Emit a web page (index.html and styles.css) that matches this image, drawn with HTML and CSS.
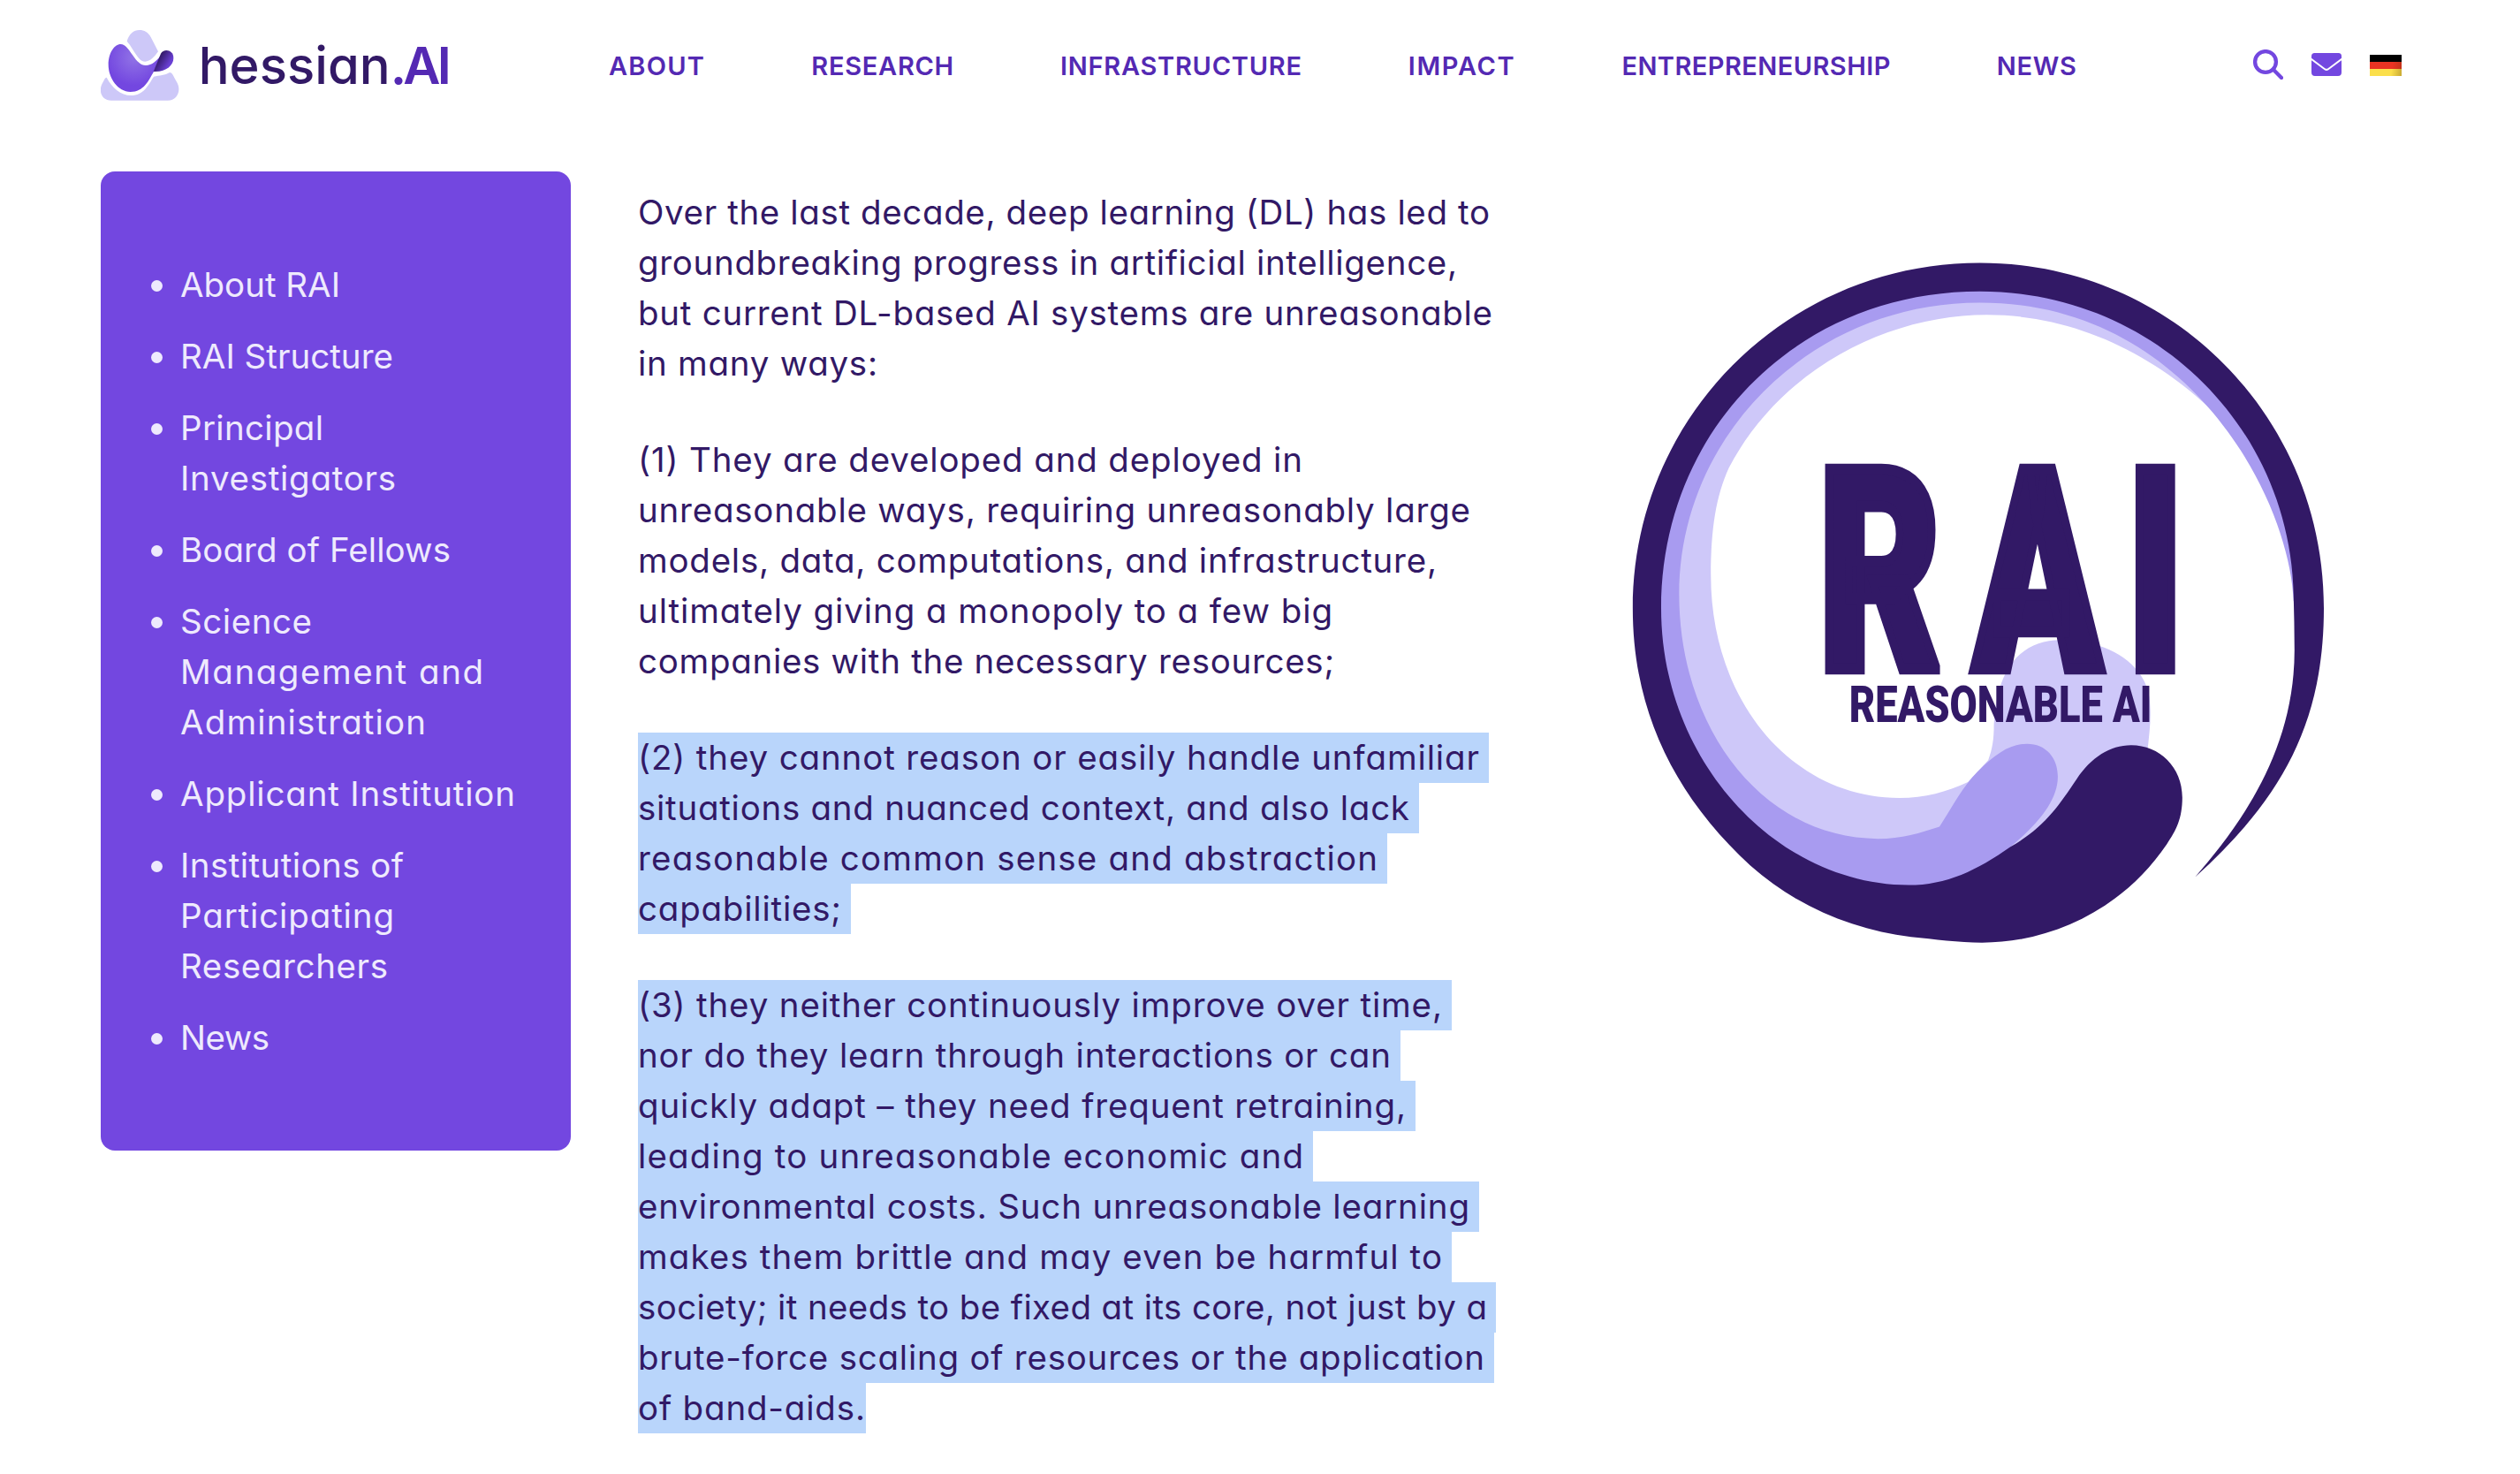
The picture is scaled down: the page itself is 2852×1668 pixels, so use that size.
FILE: index.html
```html
<!DOCTYPE html>
<html lang="en">
<head>
<meta charset="utf-8">
<title>hessian.AI – Reasonable AI</title>
<link rel="stylesheet" href="styles.css">
</head>
<body>
<header class="header">
  <a class="brand">
    <svg class="brand-mark" viewBox="42 42 266 240">
      <defs>
        <radialGradient id="body" gradientUnits="userSpaceOnUse" cx="155" cy="135" r="95">
          <stop offset="0" stop-color="#9173e6"/><stop offset="1" stop-color="#7347e0"/>
        </radialGradient>
        <linearGradient id="leaf" gradientUnits="userSpaceOnUse" x1="236" y1="140" x2="272" y2="162">
          <stop offset="0" stop-color="#321966"/><stop offset="1" stop-color="#6a40d4"/>
        </linearGradient>
      </defs>
      <path fill="#cdc8f8" d="M131 80C138 55 154 42 173 42C190 42 203 50 212 66L237 115C225 132 210 149 193 149C176 149 165 130 152 110Q142 92 131 80Z"/>
      <path fill="#cdc8f8" d="M62 203C80 237 110 264 145 264C188 264 204 228 222 200C242 196 260 196 276 186C284 186 288 196 292 204L302 222C316 250 300 281 270 281L78 281C46 281 34 250 46 226L56 207Q59 203 62 203Z"/>
      <path fill="url(#body)" d="M110 90C125 90 135 105 150 127C165 149 178 162 195 162C215 162 235 145 250 122L222 183C205 213 188 252 143 252C100 252 68 205 68 160C68 120 88 90 110 90Z"/>
      <path fill="url(#leaf)" d="M246 122C256 104 289 108 289 137C289 162 262 186 221 183Z"/>
    </svg>
    <span class="brand-name"><span data-fit="217">hessian</span><b data-fit="69">.AI</b></span>
  </a>
  <nav class="nav">
    <a data-fit="108">ABOUT</a>
    <a data-fit="161">RESEARCH</a>
    <a data-fit="273">INFRASTRUCTURE</a>
    <a data-fit="120">IMPACT</a>
    <a data-fit="304">ENTREPRENEURSHIP</a>
    <a data-fit="90">NEWS</a>
  </nav>
  <div class="tools">
    <svg class="tool-search" viewBox="0 0 34 34"><circle cx="14" cy="14" r="11.9"/><path d="M22.6 22.6L32 32"/></svg>
    <svg class="tool-mail" viewBox="0 0 34 26"><path d="M3.5 0H30.5Q34 0 34 3.5V5.8L18.7 17.2Q17 18.4 15.3 17.2L0 5.8V3.5Q0 0 3.5 0Z"/><path d="M0 8.2L14.8 19.2Q17 20.7 19.2 19.2L34 8.2V22Q34 26 30 26H4Q0 26 0 22Z"/></svg>
    <span class="flag"></span>
  </div>
</header>

<main class="page">
  <aside class="sidebar">
    <ul class="menu">
      <li><span data-fit="181">About RAI</span></li>
      <li><span data-fit="241">RAI Structure</span></li>
      <li><span data-fit="162">Principal</span><span data-fit="244">Investigators</span></li>
      <li><span data-fit="306">Board of Fellows</span></li>
      <li><span data-fit="149">Science</span><span data-fit="343">Management and</span><span data-fit="278">Administration</span></li>
      <li><span data-fit="379">Applicant Institution</span></li>
      <li><span data-fit="253">Institutions of</span><span data-fit="242">Participating</span><span data-fit="235">Researchers</span></li>
      <li><span data-fit="101">News</span></li>
    </ul>
  </aside>

  <article class="text">
    <p>
      <span data-fit="964">Over the last decade, deep learning (DL) has led to</span>
      <span data-fit="927">groundbreaking progress in artificial intelligence,</span>
      <span data-fit="967">but current DL-based AI systems are unreasonable</span>
      <span data-fit="271">in many ways:</span>
    </p>
    <p>
      <span data-fit="752">(1) They are developed and deployed in</span>
      <span data-fit="942">unreasonable ways, requiring unreasonably large</span>
      <span data-fit="904">models, data, computations, and infrastructure,</span>
      <span data-fit="786">ultimately giving a monopoly to a few big</span>
      <span data-fit="788">companies with the necessary resources;</span>
    </p>
    <p class="selected">
      <span data-fit="952">(2) they cannot reason or easily handle unfamiliar</span>
      <span data-fit="873">situations and nuanced context, and also lack</span>
      <span data-fit="837">reasonable common sense and abstraction</span>
      <span data-fit="230">capabilities;</span>
    </p>
    <p class="selected selected-end">
      <span data-fit="910">(3) they neither continuously improve over time,</span>
      <span data-fit="852">nor do they learn through interactions or can</span>
      <span data-fit="869">quickly adapt – they need frequent retraining,</span>
      <span data-fit="753">leading to unreasonable economic and</span>
      <span data-fit="941">environmental costs. Such unreasonable learning</span>
      <span data-fit="910">makes them brittle and may even be harmful to</span>
      <span data-fit="961">society; it needs to be fixed at its core, not just by a</span>
      <span data-fit="958">brute-force scaling of resources or the application</span>
      <span data-fit="257">of band-aids.</span>
    </p>
  </article>

  <figure class="emblem">
    <svg viewBox="0 0 1568 1568" preserveAspectRatio="none">
      <path fill="#cec8f9" d="M1340 435C1200 270 1010 163 800 163C600 163 370 270 255 490C228 550 217 620 217 720C217 990 390 1196 615 1196C670 1196 715 1183 760 1162L803 1115C812 1090 815 1070 815 1040C820 910 880 858 955 858C1070 858 1145 920 1145 1000C1147 1030 1143 1060 1140 1090L900 1300L570 1320C280 1300 130 1050 130 760C130 400 430 125 785 125C1000 125 1220 250 1340 435Z"/>
      <path fill="#a89bf0" d="M1448 775C1440 560 1230 137 785 137C430 137 150 420 150 760C150 1050 330 1283 570 1283C620 1283 660 1270 700 1257C730 1210 750 1170 780 1140C820 1100 850 1080 885 1080C925 1080 950 1110 950 1150C950 1200 910 1250 850 1300L800 1420L560 1420C250 1380 90 1100 90 795C90 400 400 95 785 95C1150 95 1470 380 1455 775Z"/>
      <path fill="#321966" d="M1240 1365C1330 1260 1450 1100 1450 880C1450 840 1449 800 1448 760C1440 400 1150 113 785 113C400 113 112 410 112 790C112 1120 360 1382 635 1382C715 1382 780 1350 850 1300C920 1260 950 1215 990 1155C1020 1110 1060 1083 1105 1083C1165 1083 1213 1130 1213 1195C1213 1240 1200 1265 1180 1295C1090 1430 940 1505 790 1505C740 1505 690 1498 640 1493C520 1478 400 1430 300 1340C140 1190 52 1010 52 790C52 380 380 52 785 52C1190 52 1512 380 1512 790C1512 1040 1420 1200 1240 1365Z"/>
      <text class="emblem-title" transform="translate(0 920) scale(.66 1)" x="674 1170 1661" y="0">RAI</text>
      <text class="emblem-sub" x="509" y="1033" textLength="640" lengthAdjust="spacingAndGlyphs">REASONABLE AI</text>
    </svg>
  </figure>
</main>
<script src="fit.js"></script>
</body>
</html>
```
FILE: styles.css
```css
* { box-sizing: border-box; }

body {
  margin: 0;
  background: #fff;
  color: #321966;
  font-family: Inter, "Liberation Sans", sans-serif;
  font-feature-settings: "cv11";
  overflow: hidden;
}

[data-fit] { white-space: nowrap; }

.header {
  display: flex;
  align-items: flex-start;
  height: 194px;
  padding-left: 114px;
}

.brand { display: flex; width: 575px; padding-top: 34px; }
.brand-mark { width: 88.7px; height: 80px; }
.brand-name {
  display: flex;
  margin-left: 22px;
  font-size: 58px;
  line-height: 80px;
  font-weight: 500;
}
.brand-name b { color: #5429b3; font-weight: 600; }

.nav {
  display: flex;
  gap: 120px;
  width: 1861px;
  padding-top: 54px;
  color: #5429b3;
  font-size: 29px;
  line-height: 41px;
  font-weight: 600;
}

.tools { display: flex; padding-top: 56px; }
.tool-search {
  width: 34px;
  height: 34px;
  fill: none;
  stroke: #7347e0;
  stroke-width: 4.3;
  stroke-linecap: round;
}
.tool-mail { width: 34px; height: 26px; margin: 4px 32px 0; fill: #7347e0; }
.flag {
  width: 36px;
  height: 24px;
  margin-top: 6px;
  background:
    linear-gradient(100deg, transparent 65%, rgba(90, 50, 0, .35)) 0 8px no-repeat,
    linear-gradient(#000 8px, #e93323 8px 16px, #fbdf4b 16px);
}

.page {
  display: grid;
  grid-template-columns: 532px 1022px 840px;
  column-gap: 76px;
  padding-left: 114px;
  align-items: start;
}

.sidebar {
  height: 1108px;
  padding: 100px 0 0 57px;
  border-radius: 16px;
  background: #7347e0;
  color: #eeeafd;
}
.menu {
  display: flex;
  flex-direction: column;
  gap: 24px;
  margin: 0;
  padding: 0;
  list-style: none;
  font-size: 38.5px;
  line-height: 57px;
}
.menu li {
  display: grid;
  grid-template-columns: 13px max-content;
  column-gap: 20px;
}
.menu li::before {
  content: "";
  width: 13px;
  height: 13px;
  margin-top: 23px;
  border-radius: 50%;
  background: #eeeafd;
}
.menu span { grid-column: 2; justify-self: start; }

.text {
  display: flex;
  flex-direction: column;
  gap: 52px;
  padding-top: 18px;
  font-size: 38.5px;
  line-height: 57px;
}
.text p {
  display: flex;
  flex-direction: column;
  align-items: flex-start;
  margin: 0;
}
.selected span { padding-right: 10px; background: #b9d5fb; }
.selected-end span:last-child { padding-right: 0; }

.emblem { margin: 76px 0 0; }
.emblem svg { display: block; width: 840px; height: 830px; }
.emblem text { fill: #321966; font-family: Roboto, sans-serif; }
.emblem-title {
  font-size: 600px;
  font-weight: 900;
  stroke: #321966;
  stroke-width: 24;
}
.emblem-sub { font-size: 107px; font-weight: 900; }
```
FILE: fit.js
```js
// Track each line out or in so that it takes the measure in data-fit (px).
document.querySelectorAll("[data-fit]").forEach(function (el) {
  var range = document.createRange();
  range.selectNodeContents(el);
  var width = range.getBoundingClientRect().width;
  var target = Number(el.dataset.fit);
  el.style.letterSpacing = (target - width) / (el.textContent.length - 1) + "px";
});
```
